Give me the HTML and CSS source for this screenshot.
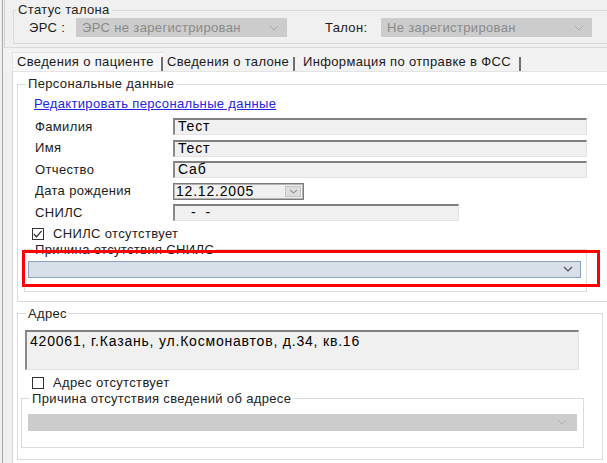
FILE: index.html
```html
<!DOCTYPE html>
<html lang="ru">
<head>
<meta charset="utf-8">
<title>Сведения о пациенте</title>
<link rel="stylesheet" href="styles.css">
</head>
<body>
<div class="screen">
  <div class="frame">
    <div class="status-panel">
      <fieldset class="group status-group">
        <legend class="legend">Статус талона</legend>
        <div class="status-row">
          <span class="status-label lbl-ers">ЭРС :</span>
          <div class="combo combo-off combo-status">
            <span class="combo-text">ЭРС не зарегистрирован</span>
            <svg class="chev" width="10" height="6" viewBox="0 0 10 6"><path d="M1 1 L5 5 L9 1" fill="none" stroke="#a8a8a8" stroke-width="1"/></svg>
          </div>
          <span class="status-label lbl-talon">Талон:</span>
          <div class="combo combo-off combo-status">
            <span class="combo-text">Не зарегистрирован</span>
            <svg class="chev" width="10" height="6" viewBox="0 0 10 6"><path d="M1 1 L5 5 L9 1" fill="none" stroke="#a8a8a8" stroke-width="1"/></svg>
          </div>
        </div>
      </fieldset>
    </div>

    <div class="tabs">
      <div class="tab tab-active tab-1">Сведения о пациенте</div>
      <div class="tab tab-2">Сведения о талоне</div>
      <div class="tab tab-3">Информация по отправке в ФСС</div>
    </div>

    <div class="tab-page">
      <fieldset class="group group-personal">
        <legend class="legend">Персональные данные</legend>
        <a class="edit-link" href="#">Редактировать персональные данные</a>
        <div class="form-grid">
          <span class="field-label">Фамилия</span>
          <div class="textbox tb-wide">Тест</div>
          <span class="field-label">Имя</span>
          <div class="textbox tb-wide">Тест</div>
          <span class="field-label">Отчество</span>
          <div class="textbox tb-wide">Саб</div>
          <span class="field-label">Дата рождения</span>
          <div class="datepicker">
            <span class="date-text">12.12.2005</span>
            <span class="date-btn"><svg width="9" height="5" viewBox="0 0 9 5"><path d="M1 1 L4.5 4 L8 1" fill="none" stroke="#9a9a9a" stroke-width="1.2"/></svg></span>
          </div>
          <span class="field-label">СНИЛС</span>
          <div class="textbox tb-snils"><span class="dash dash-1">-</span><span class="dash dash-2">-</span></div>
        </div>
        <label class="check-row check-snils">
          <span class="checkbox checked"><svg width="12" height="12" viewBox="0 0 12 12"><path d="M2 6 L5 9 L10.5 2.5" fill="none" stroke="#333" stroke-width="1.3"/></svg></span>
          <span class="check-text">СНИЛС отсутствует</span>
        </label>
        <fieldset class="group group-inner group-snils">
          <legend class="legend legend-inner">Причина отсутствия СНИЛС</legend>
          <div class="combo combo-active combo-snils">
            <span class="combo-text"></span>
            <svg class="chev" width="10" height="6" viewBox="0 0 10 6"><path d="M1 1 L5 5 L9 1" fill="none" stroke="#505050" stroke-width="1.2"/></svg>
          </div>
        </fieldset>
      </fieldset>

      <fieldset class="group group-address">
        <legend class="legend">Адрес</legend>
        <div class="textarea">420061, г.Казань, ул.Космонавтов, д.34, кв.16</div>
        <label class="check-row check-address">
          <span class="checkbox"></span>
          <span class="check-text">Адрес отсутствует</span>
        </label>
        <fieldset class="group group-inner group-addr-reason">
          <legend class="legend legend-inner">Причина отсутствия сведений об адресе</legend>
          <div class="combo combo-off combo-addr">
            <span class="combo-text"></span>
            <svg class="chev" width="10" height="6" viewBox="0 0 10 6"><path d="M1 1 L5 5 L9 1" fill="none" stroke="#b0b0b0" stroke-width="1"/></svg>
          </div>
        </fieldset>
      </fieldset>
    </div>
  </div>
  <div class="highlight"></div>
</div>
</body>
</html>
```

FILE: styles.css
```css
* { box-sizing: border-box; }
html, body { margin: 0; padding: 0; }
body {
  width: 607px;
  height: 463px;
  overflow: hidden;
  background: #f0f0f0;
  font-family: "Liberation Sans", Arial, sans-serif;
  font-size: 13px;
  letter-spacing: 0.35px;
  color: #1c1c1c;
}
.screen {
  position: relative;
  width: 607px;
  height: 463px;
  overflow: hidden;
  padding-left: 2px;
}
.frame {
  height: 100%;
  border-left: 1px solid #a6a6a6;
}

/* ---------- status panel ---------- */
.status-panel {
  margin-left: 1px;
  height: 48px;
  padding: 3px 0 0 8px;
  border-left: 1px solid #d2d2d2;
  border-bottom: 1px solid #dadada;
}
.group {
  margin: 0;
  padding: 0;
  border: 1px solid #dadada;
  min-width: 0;
}
.status-group {
  border-right: none;
  padding-bottom: 6px;
}
.legend {
  padding: 0 2px;
  margin-left: 2px;
  line-height: 14px;
  color: #222;
}
.status-row {
  display: flex;
  align-items: center;
  height: 19px;
  margin-top: 1px;
  padding-left: 15px;
}
.status-label { color: #1c1c1c; flex: none; }
.lbl-ers { width: 47px; }
.lbl-talon { width: 56px; margin-left: 38px; }

.combo {
  display: flex;
  align-items: center;
  justify-content: space-between;
  height: 17px;
  flex: none;
}
.combo-status {
  width: 211px;
  height: 19px;
  background: #cccccc;
  padding: 0 8px 0 6px;
}
.combo-text { color: #8a8a8a; white-space: nowrap; }
.chev { flex: none; }

/* ---------- tabs ---------- */
.tabs {
  display: flex;
  height: 23px;
  padding: 4px 0 0 9px;
  background: #f2f2f2;
}
.tab {
  height: 19px;
  line-height: 19px;
  white-space: nowrap;
  color: #1a1a1a;
  background: linear-gradient(#6f6f6f, #6f6f6f) right bottom / 2px 14px no-repeat;
}
.tab-active {
  background-color: #f8f8f8;
  border-top: 1px solid #e2e2e2;
  border-left: 1px solid #e2e2e2;
  line-height: 18px;
}
.tab-1 { width: 151px; padding-left: 4px; }
.tab-2 { width: 132px; padding-left: 4px; }
.tab-3 { width: 226px; padding-left: 8px; }

/* ---------- tab page ---------- */
.tab-page {
  margin-left: 9px;
  height: 392px;
  background: #ffffff;
  border-left: 1px solid #d6d6d6;
  border-top: 1px solid #e4e4e4;
  padding: 5px 0 0 4px;
}
.group-personal {
  border-right: none;
  padding-bottom: 9px;
}
.group-personal > .legend,
.group-address > .legend { margin-left: 8px; }

.edit-link {
  display: block;
  margin: 6px 0 0 16px;
  line-height: 14px;
  color: #2424e6;
  text-decoration: underline;
  width: max-content;
}
.form-grid {
  display: grid;
  grid-template-columns: 138px 414px;
  grid-auto-rows: 17px;
  row-gap: 4.5px;
  margin: 7px 0 0 17px;
  align-items: center;
}
.field-label { color: #1c1c1c; line-height: 14px; }

.textbox {
  height: 17px;
  background: #f0f0f0;
  border-top: 2px solid #808080;
  border-left: 2px solid #8a8a8a;
  border-right: 1px solid #e3e3e3;
  border-bottom: 1px solid #e3e3e3;
  padding-left: 3px;
  font-size: 14px;
  letter-spacing: 0.8px;
  line-height: 13px;
  color: #000;
  white-space: nowrap;
}
.tb-wide { width: 414px; }
.tb-snils { width: 286px; display: flex; }
.dash-1 { margin-left: 13px; }
.dash-2 { margin-left: 9px; }

.datepicker {
  width: 131px;
  height: 17px;
  display: flex;
  align-items: center;
  justify-content: space-between;
  background: #f0f0f0;
  border: 1px solid #7c7c7c;
  box-shadow: inset 0 0 0 1px #b4b4b4;
  padding: 0 2px 0 2px;
}
.date-text {
  font-size: 14px;
  letter-spacing: 0.8px;
  color: #000;
  line-height: 14px;
}
.date-btn {
  width: 16px;
  height: 11px;
  background: #dedede;
  border: 1px solid #c4c4c4;
  display: flex;
  align-items: center;
  justify-content: center;
}

.check-row {
  display: flex;
  align-items: center;
  height: 18px;
  gap: 9px;
}
.check-snils { margin: 3.5px 0 0 14px; }
.check-address { margin: 4px 0 0 14px; }
.checkbox {
  width: 12px;
  height: 12px;
  border: 1px solid #333;
  background: #fff;
  display: flex;
}
.checkbox svg { margin: -1px 0 0 -1px; }
.check-text { color: #1c1c1c; }

.group-inner .legend-inner { margin-left: 8px; }
.group-snils {
  width: 563px;
  margin-left: 6px;
  padding-bottom: 13px;
}
.combo-snils {
  width: 553px;
  margin: 4px 0 0 3px;
  background: #d7dfe8;
  border: 1px solid #8ba3bf;
  padding: 0 7px 0 4px;
}

.group-address {
  margin: 5px 4px 0 0;
  padding-bottom: 11px;
}
.textarea {
  width: 554px;
  height: 40px;
  margin: 9px 0 0 7px;
  background: #f0f0f0;
  border-top: 2px solid #808080;
  border-left: 2px solid #8a8a8a;
  border-right: 1px solid #e3e3e3;
  border-bottom: 1px solid #e3e3e3;
  padding: 2px 3px;
  font-size: 14px;
  letter-spacing: 0.8px;
  line-height: 14px;
  color: #000;
  white-space: nowrap;
}
.group-addr-reason {
  width: 563px;
  margin-left: 3px;
  padding-bottom: 16px;
}
.combo-addr {
  width: 549px;
  margin: 8px 0 0 6px;
  background: #cccccc;
  padding: 0 10px 0 4px;
}

/* annotation overlay */
.highlight {
  position: absolute;
  left: 22px;
  top: 250px;
  width: 578px;
  height: 37px;
  border: 3px solid #ff0000;
  pointer-events: none;
}
```
